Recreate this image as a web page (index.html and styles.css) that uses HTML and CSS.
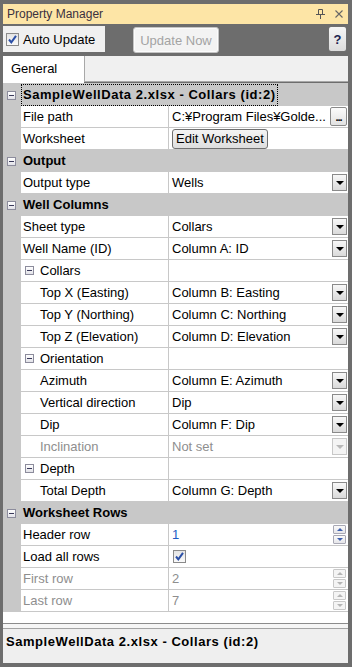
FILE: index.html
```html
<!DOCTYPE html>
<html>
<head>
<meta charset="utf-8">
<link rel="stylesheet" href="styles.css">
</head>
<body>
<div class="win">
  <div class="titlebar">
    <span class="title">Property Manager</span>
    <span class="ticons">
      <svg width="9" height="10" viewBox="0 0 9 10"><path d="M2.5 0.5h4v5h-4z M0 5.5h9 M4.5 5.5v4.5" fill="none" stroke="#555" stroke-width="1"/></svg>
      <svg width="8" height="8" viewBox="0 0 8 8"><path d="M0.5 0.5L7.5 7.5M7.5 0.5L0.5 7.5" stroke="#666" stroke-width="1.1"/></svg>
    </span>
  </div>
  <div class="toolbar">
    <div class="auto">
      <span class="chk"><svg width="11" height="11" viewBox="0 0 11 11"><path d="M2 5.5L4.3 8.3L9 1.8" fill="none" stroke="#2b4fa6" stroke-width="2"/></svg></span>
      <span>Auto Update</span>
    </div>
    <div class="upd">Update Now</div>
    <div class="help">?</div>
  </div>
  <div class="tabs">
    <div class="tab">General</div>
    <div class="tabrest"></div>
  </div>
  <div class="grid">
    <div class="row cat"><span class="gut"><i class="exp"></i></span><span class="clabel focus wide">SampleWellData 2.xlsx - Collars (id:2)</span></div>
    <div class="row"><span class="gut"></span><span class="name">File path</span><span class="val"><span class="txt">C:¥Program Files¥Golde...</span><span class="ell">...</span></span></div>
    <div class="row"><span class="gut"></span><span class="name">Worksheet</span><span class="val"><span class="editbtn">Edit Worksheet</span></span></div>

    <div class="row cat"><span class="gut"><i class="exp"></i></span><span class="clabel">Output</span></div>
    <div class="row"><span class="gut"></span><span class="name">Output type</span><span class="val"><span class="txt">Wells</span><span class="dd"></span></span></div>

    <div class="row cat"><span class="gut"><i class="exp"></i></span><span class="clabel">Well Columns</span></div>
    <div class="row"><span class="gut"></span><span class="name">Sheet type</span><span class="val"><span class="txt">Collars</span><span class="dd"></span></span></div>
    <div class="row"><span class="gut"></span><span class="name">Well Name (ID)</span><span class="val"><span class="txt">Column A: ID</span><span class="dd"></span></span></div>
    <div class="row"><span class="gut"></span><span class="name sub"><i class="exp"></i>Collars</span><span class="val"></span></div>
    <div class="row"><span class="gut"></span><span class="name ind">Top X (Easting)</span><span class="val"><span class="txt">Column B: Easting</span><span class="dd"></span></span></div>
    <div class="row"><span class="gut"></span><span class="name ind">Top Y (Northing)</span><span class="val"><span class="txt">Column C: Northing</span><span class="dd"></span></span></div>
    <div class="row"><span class="gut"></span><span class="name ind">Top Z (Elevation)</span><span class="val"><span class="txt">Column D: Elevation</span><span class="dd"></span></span></div>
    <div class="row"><span class="gut"></span><span class="name sub"><i class="exp"></i>Orientation</span><span class="val"></span></div>
    <div class="row"><span class="gut"></span><span class="name ind">Azimuth</span><span class="val"><span class="txt">Column E: Azimuth</span><span class="dd"></span></span></div>
    <div class="row"><span class="gut"></span><span class="name ind">Vertical direction</span><span class="val"><span class="txt">Dip</span><span class="dd"></span></span></div>
    <div class="row"><span class="gut"></span><span class="name ind">Dip</span><span class="val"><span class="txt">Column F: Dip</span><span class="dd"></span></span></div>
    <div class="row dis"><span class="gut"></span><span class="name ind">Inclination</span><span class="val"><span class="txt">Not set</span><span class="dd off"></span></span></div>
    <div class="row"><span class="gut"></span><span class="name sub"><i class="exp"></i>Depth</span><span class="val"></span></div>
    <div class="row"><span class="gut"></span><span class="name ind">Total Depth</span><span class="val"><span class="txt">Column G: Depth</span><span class="dd"></span></span></div>

    <div class="row cat"><span class="gut"><i class="exp"></i></span><span class="clabel">Worksheet Rows</span></div>
    <div class="row"><span class="gut"></span><span class="name">Header row</span><span class="val"><span class="txt num">1</span><span class="spin"><i class="up"></i><i class="dn"></i></span></span></div>
    <div class="row"><span class="gut"></span><span class="name">Load all rows</span><span class="val"><span class="vchk"><svg width="11" height="11" viewBox="0 0 11 11"><path d="M2 5.5L4.3 8.3L9 1.8" fill="none" stroke="#2b4fa6" stroke-width="2"/></svg></span></span></div>
    <div class="row dis"><span class="gut"></span><span class="name">First row</span><span class="val"><span class="txt">2</span><span class="spin off"><i class="up"></i><i class="dn"></i></span></span></div>
    <div class="row dis"><span class="gut"></span><span class="name">Last row</span><span class="val"><span class="txt">7</span><span class="spin off"><i class="up"></i><i class="dn"></i></span></span></div>
  </div>
  <div class="splitter"></div>
  <div class="desc">SampleWellData 2.xlsx - Collars (id:2)</div>
</div>
</body>
</html>
```

FILE: styles.css
```css
html, body {
  margin: 0;
  padding: 0;
}
body {
  background: #6d6d6d;
  font-family: "Liberation Sans", Arial, sans-serif;
  font-size: 13px;
  color: #000;
}
.win {
  width: 352px;
  height: 667px;
  box-sizing: border-box;
  padding: 4px 4px 4px 3px;
  display: flex;
  flex-direction: column;
}
.titlebar {
  height: 20px;
  flex: none;
  background: #fde5a6;
  display: flex;
  align-items: center;
  padding-left: 4px;
  padding-right: 5px;
  font-size: 12px;
  color: #3a3040;
}
.ticons {
  margin-left: auto;
  display: flex;
  align-items: center;
  gap: 10px;
}
.toolbar {
  height: 32px;
  flex: none;
  display: flex;
  align-items: flex-start;
  padding-top: 2px;
  box-sizing: border-box;
}
.auto {
  width: 102px;
  height: 26px;
  background: #f0f0f0;
  display: flex;
  align-items: center;
  gap: 4px;
  padding-left: 3px;
  box-sizing: border-box;
}
.chk, .vchk {
  width: 13px;
  height: 13px;
  box-sizing: border-box;
  border: 1px solid #8a8a8a;
  background: linear-gradient(#e4e4e4, #fafafa);
  display: flex;
  align-items: center;
  justify-content: center;
  flex: none;
}
.upd {
  margin-left: 28px;
  margin-top: 1px;
  width: 86px;
  height: 26px;
  box-sizing: border-box;
  border: 1px solid #c4c4c4;
  border-radius: 3px;
  background: #f3f3f3;
  box-shadow: inset 0 0 0 1px #fbfbfb;
  color: #a3a3a3;
  display: flex;
  align-items: center;
  justify-content: center;
}
.help {
  margin-left: auto;
  margin-right: 1px;
  width: 19px;
  height: 26px;
  box-sizing: border-box;
  border: 1px solid #707070;
  border-radius: 3px;
  background: linear-gradient(#f6f6f6, #dcdcdc);
  display: flex;
  align-items: center;
  justify-content: center;
  font-weight: bold;
  color: #1b2250;
}
.tabs {
  height: 27px;
  flex: none;
  display: flex;
}
.tab {
  width: 81px;
  background: #fff;
  padding-left: 8px;
  box-sizing: border-box;
  line-height: 25px;
}
.tabrest {
  flex: 1;
  background: #f0f0f0;
  border-left: 1px solid #a8a8a8;
  border-bottom: 1px solid #a8a8a8;
  height: 26px;
  box-sizing: border-box;
}
.grid {
  flex: 1;
  background: #fff;
  border-top: 1px solid #c8c8c8;
  overflow: hidden;
}
.row {
  display: flex;
  height: 22px;
}
.gut {
  width: 18px;
  flex: none;
  background: #c8c8c8;
  display: flex;
  align-items: center;
  padding-left: 4px;
  box-sizing: border-box;
}
.name {
  width: 148px;
  flex: none;
  box-sizing: border-box;
  border-right: 1px solid #c8c8c8;
  border-bottom: 1px solid #c8c8c8;
  padding-left: 2px;
  line-height: 21px;
  white-space: nowrap;
  display: flex;
  align-items: center;
}
.name.ind {
  padding-left: 19px;
}
.name.sub {
  padding-left: 4px;
}
.name.sub .exp {
  margin-right: 6px;
}
.val {
  flex: 1;
  box-sizing: border-box;
  border-bottom: 1px solid #c8c8c8;
  display: flex;
  align-items: center;
  padding-left: 3px;
  white-space: nowrap;
  min-width: 0;
}
.txt {
  line-height: 21px;
}
.num {
  color: #1d5bc4;
}
.dis .name, .dis .val {
  color: #8e8e8e;
}
.cat {
  background: #c8c8c8;
}
.clabel {
  font-weight: bold;
  line-height: 20px;
  padding: 0 1px;
  border: 1px solid transparent;
  white-space: nowrap;
}
.clabel.focus {
  border: 1px dotted #000;
}
.wide {
  letter-spacing: 0.55px;
}
.exp {
  display: block;
  width: 9px;
  height: 9px;
  box-sizing: border-box;
  border: 1px solid #8c8c9c;
  background: linear-gradient(#ffffff, #e2e2e8);
  position: relative;
  flex: none;
}
.exp::after {
  content: "";
  position: absolute;
  left: 1px;
  top: 3px;
  width: 5px;
  height: 1px;
  background: #3a3a5a;
}
.dd {
  margin-left: auto;
  margin-right: 1px;
  width: 15px;
  height: 17px;
  box-sizing: border-box;
  border: 1px solid #8a8a8a;
  background: linear-gradient(#f8f8f8, #dadada);
  display: flex;
  align-items: center;
  justify-content: center;
  flex: none;
}
.dd::after {
  content: "";
  border-left: 4px solid transparent;
  border-right: 4px solid transparent;
  border-top: 4px solid #000;
  margin-top: 1px;
}
.dd.off {
  border-color: #c8c8c8;
  background: #f4f4f4;
}
.dd.off::after {
  border-top-color: #b8b8b8;
}
.ell {
  margin-left: auto;
  margin-right: 1px;
  width: 17px;
  height: 19px;
  box-sizing: border-box;
  border: 1px solid #8a8a8a;
  border-radius: 2px;
  background: linear-gradient(#fbfbfb, #e2e2e2);
  font-weight: bold;
  font-size: 11px;
  line-height: 19px;
  text-align: center;
  letter-spacing: -1px;
  flex: none;
}
.editbtn {
  height: 20px;
  box-sizing: border-box;
  border: 1px solid #707070;
  border-radius: 3px;
  background: linear-gradient(#f4f4f4, #dedede);
  padding: 0 3px;
  line-height: 18px;
}
.spin {
  margin-left: auto;
  margin-right: 2px;
  width: 13px;
  display: flex;
  flex-direction: column;
  gap: 1px;
  flex: none;
}
.spin i {
  display: flex;
  height: 9px;
  box-sizing: border-box;
  border: 1px solid #a8a8b4;
  border-radius: 1px;
  background: linear-gradient(#fafafa, #e6e6ea);
  align-items: center;
  justify-content: center;
}
.spin .up::after {
  content: "";
  border-left: 3px solid transparent;
  border-right: 3px solid transparent;
  border-bottom: 3px solid #3d5fae;
}
.spin .dn::after {
  content: "";
  border-left: 3px solid transparent;
  border-right: 3px solid transparent;
  border-top: 3px solid #3d5fae;
}
.spin.off i {
  border-color: #c8c8c8;
  background: #f4f4f4;
}
.spin.off .up::after {
  border-bottom-color: #b4b4b4;
}
.spin.off .dn::after {
  border-top-color: #b4b4b4;
}
.vchk {
  margin-left: 1px;
}
.splitter {
  height: 6px;
  flex: none;
  box-sizing: border-box;
  background: #f6f6f6;
  border-top: 1px solid #8c8c8c;
  border-bottom: 1px solid #a4a4a4;
}
.desc {
  height: 34px;
  flex: none;
  background: #efefef;
  font-weight: bold;
  padding: 3px 0 0 3px;
  box-sizing: border-box;
  line-height: 20px;
  letter-spacing: 0.55px;
}
```
